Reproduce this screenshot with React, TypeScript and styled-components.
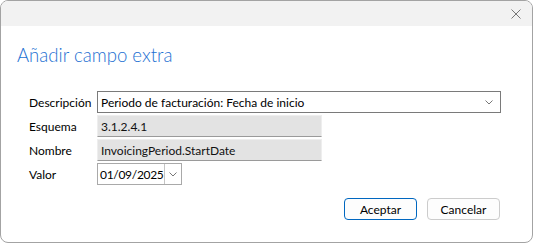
import * as React from "react";
import styled, { createGlobalStyle } from "styled-components";

const GlobalStyle = createGlobalStyle`
    html, body {
        margin: 0;
        padding: 0;
        background: #fff;
    }
    * {
        box-sizing: border-box;
    }
`;

const FONT = `"Segoe UI", Lato, "Noto Sans", sans-serif`;

const Window = styled.div`
    width: 533px;
    height: 243px;
    display: flex;
    flex-direction: column;
    border: 1px solid #a3a3a3;
    border-radius: 8px;
    overflow: hidden;
    background: #fff;
    font-family: ${FONT};
    font-size: 12px;
    color: #000;
`;

const TitleBar = styled.div`
    height: 25px;
    flex: 0 0 25px;
    display: flex;
    align-items: center;
    justify-content: flex-end;
    padding-right: 10px;
    background: #f2f2f2;
`;

const CloseButton = styled.div`
    width: 12px;
    height: 12px;
    display: flex;
    align-items: center;
    justify-content: center;
    margin-top: 1px;
`;

const Body = styled.div`
    flex: 1;
    display: flex;
    flex-direction: column;
    padding: 0 32px 0 16px;
`;

const Title = styled.h1`
    margin: 17px 0 0 0;
    font-family: ${FONT};
    font-weight: 300;
    font-size: 18.6px;
    line-height: 24px;
    color: #1b6fd2;
`;

const Form = styled.div`
    display: grid;
    grid-template-columns: 68px auto;
    grid-auto-rows: 22px;
    row-gap: 2px;
    margin: 24px 0 0 12px;
`;

const Label = styled.div`
    display: flex;
    align-items: center;
    padding-top: 1px;
`;

const Select = styled.div<{ width: number }>`
    width: ${props => props.width}px;
    height: 22px;
    display: flex;
    align-items: center;
    justify-content: space-between;
    padding: 0 7px 0 3px;
    border: 1px solid #7a7a7a;
    background: #fff;
`;

const ReadOnlyField = styled.div<{ width: number }>`
    width: ${props => props.width}px;
    height: 22px;
    display: flex;
    align-items: center;
    padding: 0 3px;
    background: #e3e3e3;
    border: 1px solid #eeeeee;
    border-bottom-color: #9a9a9a;
    color: #111;
`;

const DateField = styled.div`
    width: 85px;
    height: 22px;
    display: flex;
    align-items: stretch;
    border: 1px solid #a9a9a9;
    background: #fff;
`;

const DateText = styled.div`
    flex: 1;
    display: flex;
    align-items: center;
    padding-left: 2px;
    letter-spacing: -0.3px;
`;

const DateButton = styled.div`
    width: 17px;
    display: flex;
    align-items: center;
    justify-content: center;
    border-left: 1px solid #c4c4c4;
`;

const Footer = styled.div`
    display: flex;
    justify-content: flex-end;
    gap: 10px;
    margin-top: 13px;
`;

const Button = styled.button<{ primary?: boolean }>`
    width: 73px;
    height: 22px;
    padding: 0;
    font-family: ${FONT};
    font-size: 12px;
    color: #000;
    background: #fdfdfd;
    border: 1px solid ${props => props.primary ? "#0067c0" : "#cccccc"};
    border-radius: 4px;
`;

const Chevron = ({ color = "#777" }: { color?: string }) => (
    <svg width="8" height="5" viewBox="0 0 8 5">
        <path d="M0.5 0.5 L4 4 L7.5 0.5" fill="none" stroke={color} strokeWidth="1" />
    </svg>
);

export default function App() {
    return (
        <>
            <GlobalStyle />
            <Window>
                <TitleBar>
                    <CloseButton>
                        <svg width="10" height="10" viewBox="0 0 10 10">
                            <path d="M0.5 0.5 L9.5 9.5 M9.5 0.5 L0.5 9.5" stroke="#777" strokeWidth="1" />
                        </svg>
                    </CloseButton>
                </TitleBar>
                <Body>
                    <Title>Añadir campo extra</Title>
                    <Form>
                        <Label>Descripción</Label>
                        <Select width={404}>
                            <span>Periodo de facturación: Fecha de inicio</span>
                            <Chevron />
                        </Select>
                        <Label>Esquema</Label>
                        <ReadOnlyField width={225}>3.1.2.4.1</ReadOnlyField>
                        <Label>Nombre</Label>
                        <ReadOnlyField width={225}>InvoicingPeriod.StartDate</ReadOnlyField>
                        <Label>Valor</Label>
                        <DateField>
                            <DateText>01/09/2025</DateText>
                            <DateButton>
                                <Chevron />
                            </DateButton>
                        </DateField>
                    </Form>
                    <Footer>
                        <Button primary>Aceptar</Button>
                        <Button>Cancelar</Button>
                    </Footer>
                </Body>
            </Window>
        </>
    );
}
